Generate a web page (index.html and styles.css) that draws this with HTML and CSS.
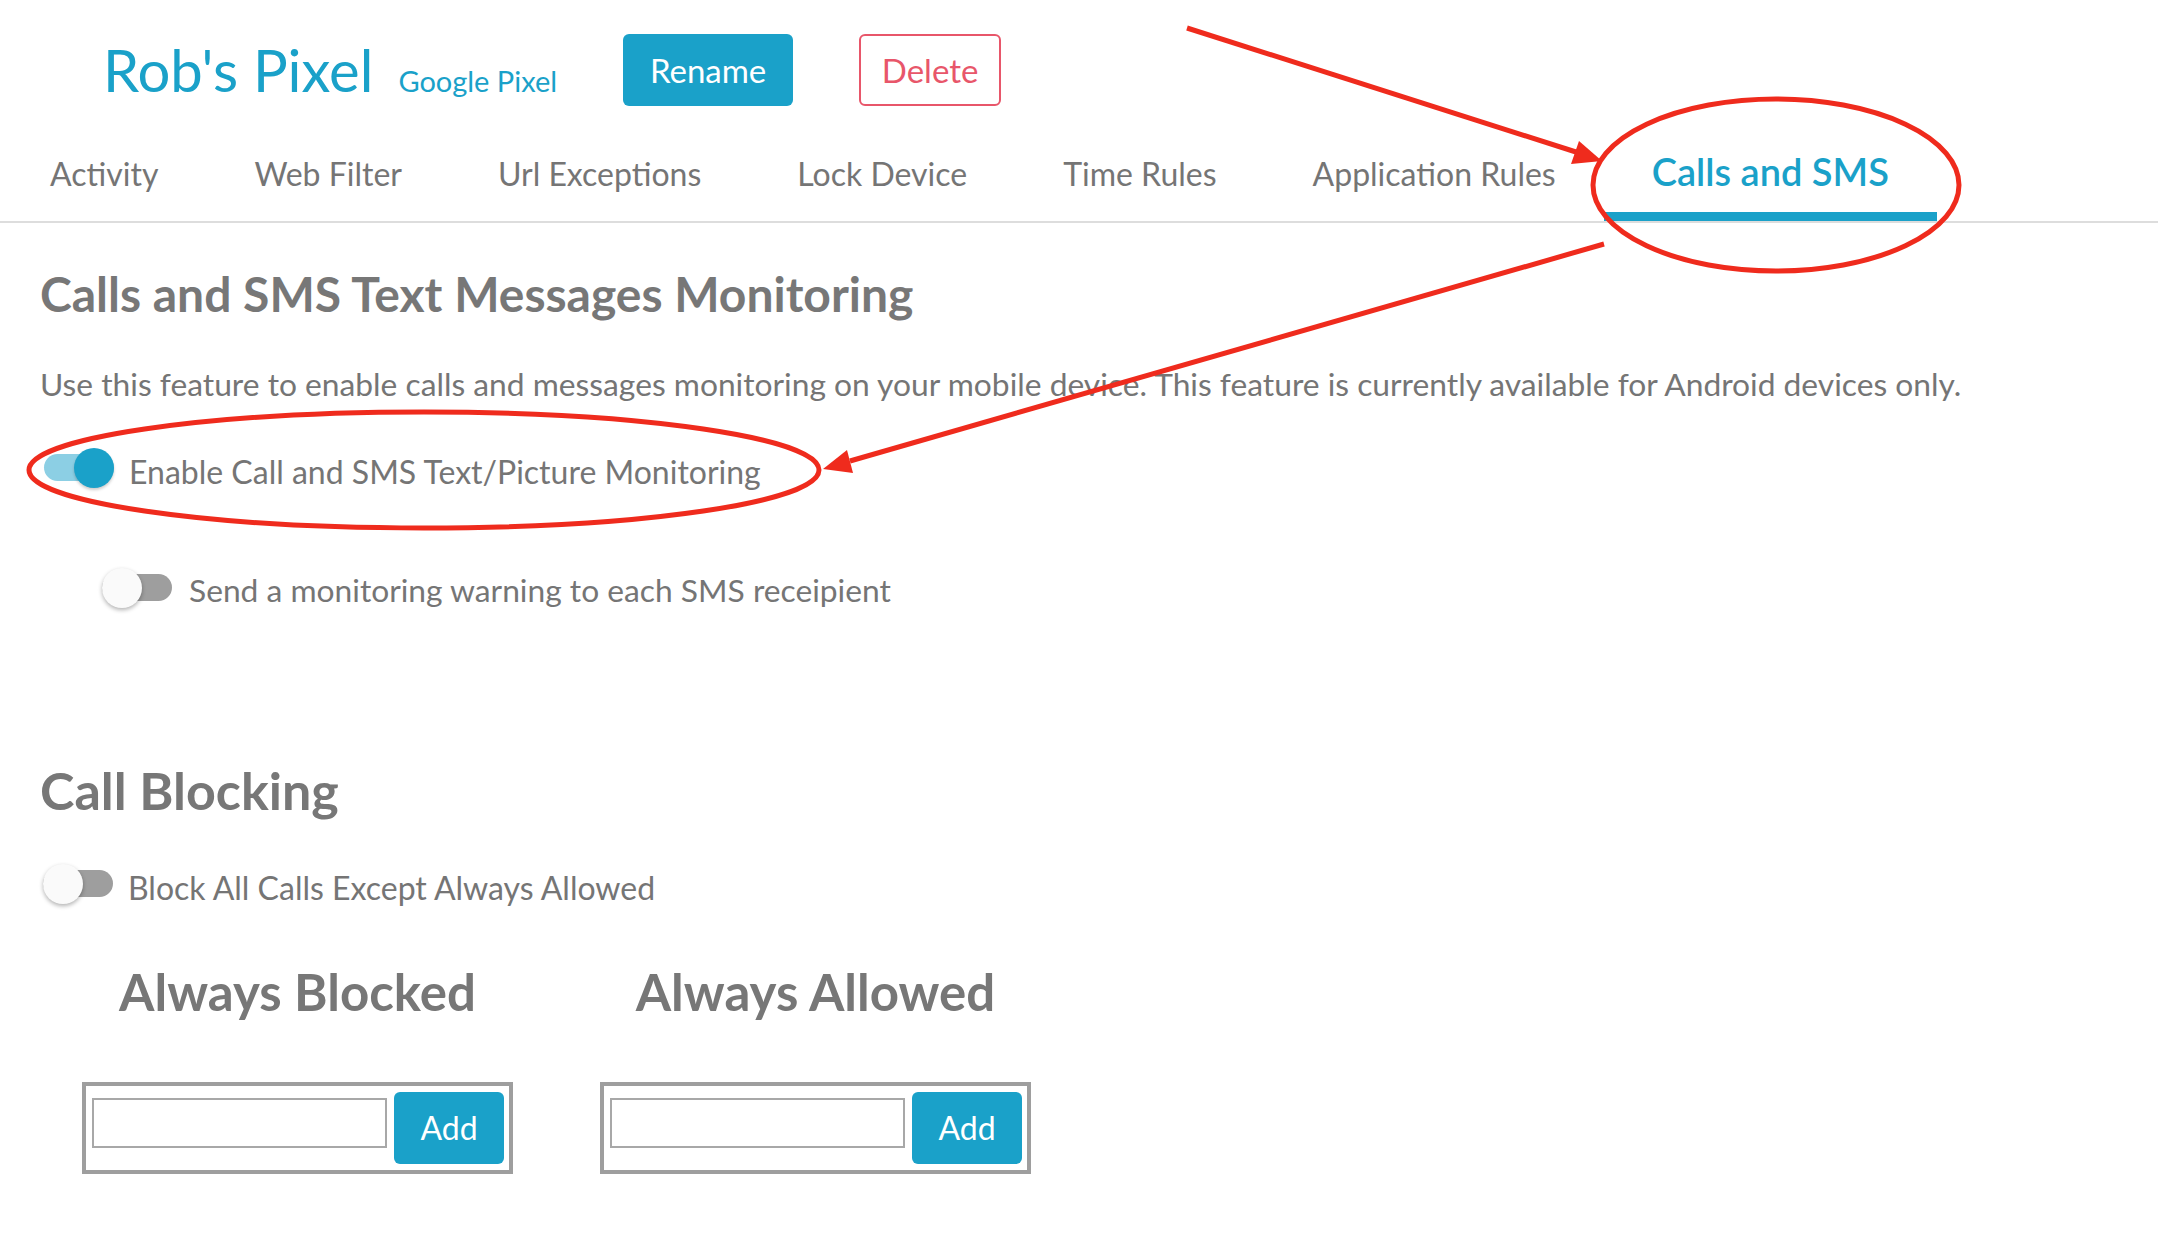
FILE: index.html
```html
<!DOCTYPE html>
<html lang="en">
<head>
<meta charset="utf-8">
<title>Rob's Pixel - Calls and SMS</title>
<link rel="stylesheet" href="styles.css">
</head>
<body>
<div class="page">
  <header class="device-header">
    <div class="device-name">
      <span class="device-title">Rob's Pixel</span>
      <span class="device-model">Google Pixel</span>
    </div>
    <button class="btn btn-primary btn-rename">Rename</button>
    <button class="btn btn-outline-danger btn-delete">Delete</button>
  </header>

  <nav class="tabs">
    <a class="tab">Activity</a>
    <a class="tab">Web Filter</a>
    <a class="tab">Url Exceptions</a>
    <a class="tab">Lock Device</a>
    <a class="tab">Time Rules</a>
    <a class="tab">Application Rules</a>
    <a class="tab active">Calls and SMS</a>
  </nav>

  <main class="content">
    <h1 class="section-title">Calls and SMS Text Messages Monitoring</h1>
    <p class="section-desc">Use this feature to enable calls and messages monitoring on your mobile device. This feature is currently available for Android devices only.</p>

    <div class="toggle-row row-enable">
      <span class="switch on"><span class="knob"></span></span>
      <span class="toggle-label">Enable Call and SMS Text/Picture Monitoring</span>
    </div>

    <div class="toggle-row row-warning">
      <span class="switch"><span class="knob"></span></span>
      <span class="toggle-label">Send a monitoring warning to each SMS receipient</span>
    </div>

    <h2 class="block-title">Call Blocking</h2>

    <div class="toggle-row row-block">
      <span class="switch"><span class="knob"></span></span>
      <span class="toggle-label">Block All Calls Except Always Allowed</span>
    </div>

    <div class="lists">
      <section class="list-col">
        <h3 class="list-title">Always Blocked</h3>
        <div class="add-box">
          <input class="add-input" type="text">
          <button class="btn btn-primary btn-add">Add</button>
        </div>
      </section>
      <section class="list-col">
        <h3 class="list-title">Always Allowed</h3>
        <div class="add-box">
          <input class="add-input" type="text">
          <button class="btn btn-primary btn-add">Add</button>
        </div>
      </section>
    </div>
  </main>

  <svg class="annotations" width="2158" height="1252" viewBox="0 0 2158 1252" aria-hidden="true">
    <g fill="none" stroke="#ef2b1d" stroke-width="5">
      <line x1="1187" y1="28" x2="1576" y2="152"/>
      <ellipse cx="1776" cy="185" rx="183" ry="86"/>
      <line x1="1604" y1="244" x2="850" y2="461"/>
      <ellipse cx="424" cy="470" rx="395" ry="58"/>
    </g>
    <g fill="#ef2b1d">
      <polygon points="1602,161 1571,164 1579,141"/>
      <polygon points="823,469 853,473 847,450"/>
    </g>
  </svg>
</div>
</body>
</html>
```

FILE: styles.css
```css
* {
  box-sizing: border-box;
}

html, body {
  margin: 0;
  padding: 0;
  background: #ffffff;
}

body {
  font-family: Lato, "Open Sans", "Liberation Sans", sans-serif;
  color: #757575;
  line-height: 1.2;
}

.page {
  position: relative;
  width: 2158px;
  min-height: 1252px;
}

/* ---------- header ---------- */
.device-header {
  display: flex;
  align-items: center;
  padding: 34px 0 0 103px;
}

.device-name {
  display: flex;
  align-items: baseline;
}

.device-title {
  font-size: 58px;
  color: #1aa1c9;
}

.device-model {
  font-size: 29px;
  color: #1aa1c9;
  margin-left: 25px;
}

.btn {
  font-family: Lato, "Open Sans", "Liberation Sans", sans-serif;
  display: flex;
  align-items: center;
  justify-content: center;
  border-radius: 6px;
  cursor: pointer;
  padding: 0;
}

.btn-primary {
  background: #1aa1c9;
  color: #ffffff;
  border: none;
}

.btn-outline-danger {
  background: #ffffff;
  color: #e8566a;
  border: 2px solid #e8566a;
}

.btn-rename {
  width: 170px;
  height: 72px;
  font-size: 33px;
  margin-left: 66px;
}

.btn-delete {
  width: 142px;
  height: 72px;
  font-size: 33px;
  margin-left: 66px;
}

/* ---------- tabs ---------- */
.tabs {
  display: flex;
  align-items: flex-end;
  margin-top: 43px;
  padding-left: 2px;
  border-bottom: 2px solid #dddddd;
}

.tab {
  font-size: 32px;
  color: #757575;
  padding: 0 48px 18px;
  border-bottom: 9px solid transparent;
  white-space: nowrap;
}

.tab.active {
  font-size: 38px;
  font-weight: 600;
  color: #1aa1c9;
  padding-bottom: 17px;
  border-bottom-color: #1aa1c9;
}

/* ---------- content ---------- */
.content {
  padding-left: 40px;
}

.section-title {
  margin: 42px 0 0;
  font-size: 48px;
  font-weight: 700;
  color: #777777;
}

.section-desc {
  margin: 43px 0 0;
  font-size: 31.75px;
  color: #757575;
}

.toggle-row {
  display: flex;
  align-items: flex-start;
}

.row-enable {
  margin: 45px 0 0 4px;
}

.row-warning {
  margin: 80px 0 0 62px;
}

.row-block {
  margin: 42px 0 0 3px;
}

.toggle-label {
  font-size: 32px;
  line-height: 32px;
  color: #757575;
  margin: 8px 0 0 15px;
}

.row-warning .toggle-label {
  font-size: 31.75px;
  margin-top: 6px;
  margin-left: 17px;
}

.row-block .toggle-label {
  margin-top: 8px;
}

.switch {
  position: relative;
  display: flex;
  align-items: center;
  width: 70px;
  height: 40px;
  flex: none;
}

.switch::before {
  content: "";
  position: absolute;
  left: 0;
  right: 0;
  top: 6px;
  height: 27px;
  border-radius: 14px;
  background: #9e9e9e;
}

.knob {
  position: relative;
  width: 40px;
  height: 40px;
  border-radius: 50%;
  background: #fafafa;
  box-shadow: 0 2px 4px rgba(0, 0, 0, 0.3);
}

.switch.on {
  justify-content: flex-end;
}

.switch.on::before {
  background: #8ccfe4;
}

.switch.on .knob {
  background: #1aa1c9;
  box-shadow: 0 2px 3px rgba(0, 0, 0, 0.2);
}

.block-title {
  margin: 151px 0 0;
  font-size: 52px;
  font-weight: 700;
  color: #777777;
}

/* ---------- lists ---------- */
.lists {
  display: flex;
  gap: 87px;
  margin: 57px 0 0 42px;
}

.list-col {
  width: 431px;
  display: flex;
  flex-direction: column;
  align-items: center;
}

.list-title {
  margin: 0;
  font-size: 51px;
  font-weight: 700;
  color: #777777;
}

.add-box {
  margin-top: 60px;
  width: 431px;
  height: 92px;
  border: 4px solid #9e9e9e;
  padding: 6px 5px 6px 6px;
  display: flex;
  align-items: flex-start;
}

.add-input {
  width: 295px;
  height: 50px;
  margin-top: 6px;
  margin-right: 7px;
  border: 2px solid #a8a8a8;
  border-radius: 0;
  padding: 0 8px;
  font-size: 24px;
  outline: none;
}

.btn-add {
  width: 110px;
  height: 72px;
  font-size: 32px;
}

/* ---------- screenshot annotations ---------- */
.annotations {
  position: absolute;
  left: 0;
  top: 0;
  pointer-events: none;
}
```
